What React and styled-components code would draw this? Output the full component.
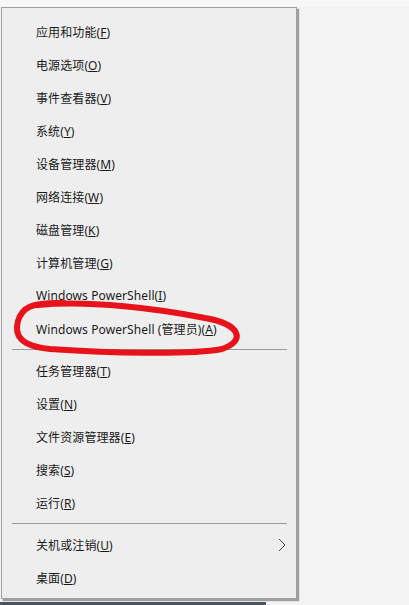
import React from 'react'
import styled, { createGlobalStyle } from 'styled-components'

const GlobalStyle = createGlobalStyle`
  html, body {
    margin: 0;
    padding: 0;
    background: #f3f3f3;
  }
  body {
    font-family: "Segoe UI", "Noto Sans", "Noto Sans CJK SC", sans-serif;
  }
`

const groups = [
  [
    ['应用和功能', 'F'],
    ['电源选项', 'O'],
    ['事件查看器', 'V'],
    ['系统', 'Y'],
    ['设备管理器', 'M'],
    ['网络连接', 'W'],
    ['磁盘管理', 'K'],
    ['计算机管理', 'G'],
    ['Windows PowerShell', 'I'],
    ['Windows PowerShell (管理员)', 'A', true],
  ],
  [
    ['任务管理器', 'T'],
    ['设置', 'N'],
    ['文件资源管理器', 'E'],
    ['搜索', 'S'],
    ['运行', 'R'],
  ],
  [
    ['关机或注销', 'U', false, true],
    ['桌面', 'D'],
  ],
]

const App = () => {
  return (
    <Page>
      <GlobalStyle />
      <Menu>
        {groups.map((group, gi) => (
          <React.Fragment key={gi}>
            {gi > 0 && <Separator />}
            {group.map(([label, key, marked, submenu]) => (
              <Item key={label}>
                <Label>
                  {label}(<u>{key}</u>)
                </Label>
                {submenu && (
                  <Chevron width="8" height="14" viewBox="0 0 8 14">
                    <polyline points="1,1 7,7 1,13" />
                  </Chevron>
                )}
                {marked && (
                  <Scribble viewBox="14 298 232 60">
                    <path d="M 38 306 C 90 301, 160 310, 205 319 C 241 325, 246 342, 222 350 C 190 356, 110 354, 50 350 C 20 347, 14 336, 18 322 C 22 309, 30 303, 64 304" />
                  </Scribble>
                )}
              </Item>
            ))}
          </React.Fragment>
        ))}
      </Menu>
      <Taskbar />
    </Page>
  )
}

const Page = styled.div`
  position: relative;
  width: 409px;
  height: 605px;
  overflow: hidden;
  padding: 7px 0 0 1px;
  box-sizing: border-box;
  background: linear-gradient(#f7f7f7 0, #f7f7f7 7px, #f3f3f3 7px);
`

const Menu = styled.div`
  position: relative;
  width: 296px;
  box-sizing: border-box;
  border: 1px solid #a0a0a0;
  background: #eeeeee;
  box-shadow: 2px 2px 1px rgba(0, 0, 0, 0.35);
  padding: 7px 0 4px;
`

const Item = styled.div`
  position: relative;
  display: flex;
  align-items: center;
  justify-content: space-between;
  height: 33px;
  padding: 0 10px 0 34px;
  color: #1a1a1a;
  font-size: 12px;
`

const Label = styled.span`
  white-space: nowrap;
  letter-spacing: 0.1px;

  u {
    text-decoration: underline;
    text-underline-offset: 1px;
  }
`

const Chevron = styled.svg`
  fill: none;
  stroke: #444;
  stroke-width: 1;
`

const Separator = styled.div`
  height: 9px;
  margin: 0 9px 0 10px;
  display: flex;
  align-items: center;

  &::after {
    content: '';
    flex: 1;
    height: 1px;
    background: #9a9a9a;
  }
`

const Scribble = styled.svg`
  position: absolute;
  left: 12px;
  top: -15px;
  width: 232px;
  height: 60px;
  overflow: visible;
  pointer-events: none;

  path {
    fill: none;
    stroke: #e8131a;
    stroke-width: 6;
    stroke-linecap: round;
    stroke-linejoin: round;
  }
`

const Taskbar = styled.div`
  position: absolute;
  left: 0;
  bottom: 0;
  width: 266px;
  height: 3px;
  background: #4a5560;
`

export default App
